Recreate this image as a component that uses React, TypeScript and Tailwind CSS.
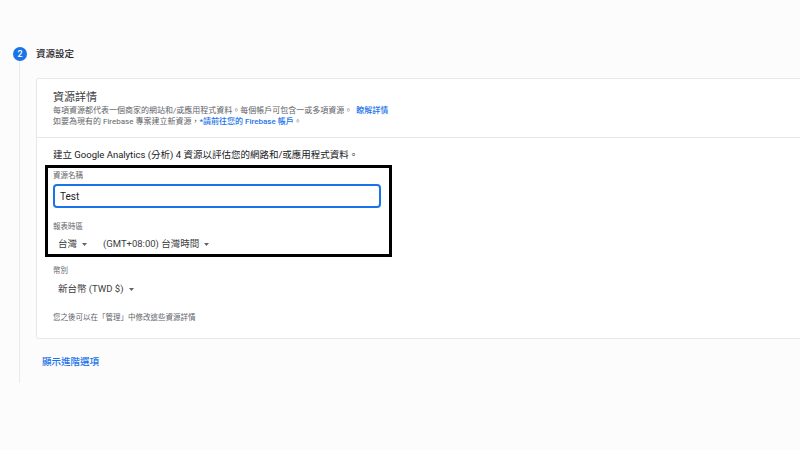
import React from "react";

const Caret = () => (
  <svg width="5" height="3" viewBox="0 0 5 3" className="ml-[5px] inline-block">
    <path d="M0 0 L5 0 L2.5 3 Z" fill="#5f6368" />
  </svg>
);

const App = () => {
  return (
    <div
      className="w-[800px] h-[450px] overflow-hidden bg-[#fdfcfd] text-[#202124]"
      style={{ fontFamily: 'Roboto, "Noto Sans CJK TC", sans-serif' }}
    >
      <div className="pt-[47px] flex">
        {/* Stepper rail */}
        <div className="w-[36px] shrink-0 flex flex-col items-start pl-[13px]">
          <div className="w-[14px] h-[14px] rounded-full bg-[#1a73e8] text-white text-[9px] leading-[14px] text-center font-medium">
            2
          </div>
          <div className="ml-[6px] w-px h-[322px] bg-[#ebe9ed]" />
        </div>

        {/* Step content */}
        <div className="flex-1">
          <div className="h-[14px] flex items-center text-[9.5px] font-medium">資源設定</div>

          <div className="mt-[17px] w-[780px] bg-white border border-[#e9e7eb] rounded-[2px]">
            {/* Header */}
            <div className="px-[16px] pt-[12px] pb-[10px] border-b border-[#e9e7eb]">
              <div className="text-[11px] leading-[14px] text-[#3c4043]">資源詳情</div>
              <div className="text-[8px] leading-[11px] text-[#5f6368]">
                每項資源都代表一個商家的網站和/或應用程式資料。每個帳戶可包含一或多項資源。
                <span className="ml-[4px] text-[#1a73e8] font-medium">瞭解詳情</span>
              </div>
              <div className="text-[8px] leading-[11px] text-[#5f6368]">
                如要為現有的 Firebase 專案建立新資源，
                <span className="text-[#1a73e8] font-medium">*請前往您的 Firebase 帳戶</span>。
              </div>
            </div>

            {/* Form */}
            <div className="px-[16px] pt-[10px] pb-[15px]">
              <div className="text-[9.5px] leading-[13px]">
                建立 Google Analytics (分析) 4 資源以評估您的網路和/或應用程式資料。
              </div>

              <div className="-ml-[8px] mt-[4px] w-[347px] border-[3px] border-black bg-white pl-[5px] pr-[8px] pt-[3px] pb-[3px]">
                <div className="text-[7.5px] leading-[10px] text-[#5f6368]">資源名稱</div>
                <div className="mt-[3px] h-[24px] w-[328px] border-2 border-[#1a73e8] rounded-[4px] flex items-center pl-[5px] text-[10px]">
                  Test
                </div>
                <div className="mt-[14px] text-[7.5px] leading-[10px] text-[#5f6368]">報表時區</div>
                <div className="mt-[5px] h-[14px] flex items-center text-[9.5px] text-[#3c4043] pl-[5px]">
                  <span className="w-[45px] flex items-center">
                    台灣
                    <Caret />
                  </span>
                  <span className="flex items-center">
                    (GMT+08:00) 台灣時間
                    <Caret />
                  </span>
                </div>
              </div>

              <div className="mt-[9px] text-[7.5px] leading-[10px] text-[#5f6368]">幣別</div>
              <div className="mt-[6px] h-[14px] flex items-center text-[9.5px] text-[#3c4043] pl-[5px]">
                新台幣 (TWD $)
                <Caret />
              </div>

              <div className="mt-[17px] text-[7.5px] leading-[10px] text-[#5f6368]">
                您之後可以在「管理」中修改這些資源詳情
              </div>
            </div>
          </div>

          <div className="mt-[16px] ml-[6px] text-[9.5px] leading-[13px] font-medium text-[#1a73e8]">顯示進階選項</div>
        </div>
      </div>
    </div>
  );
};

export default App;
